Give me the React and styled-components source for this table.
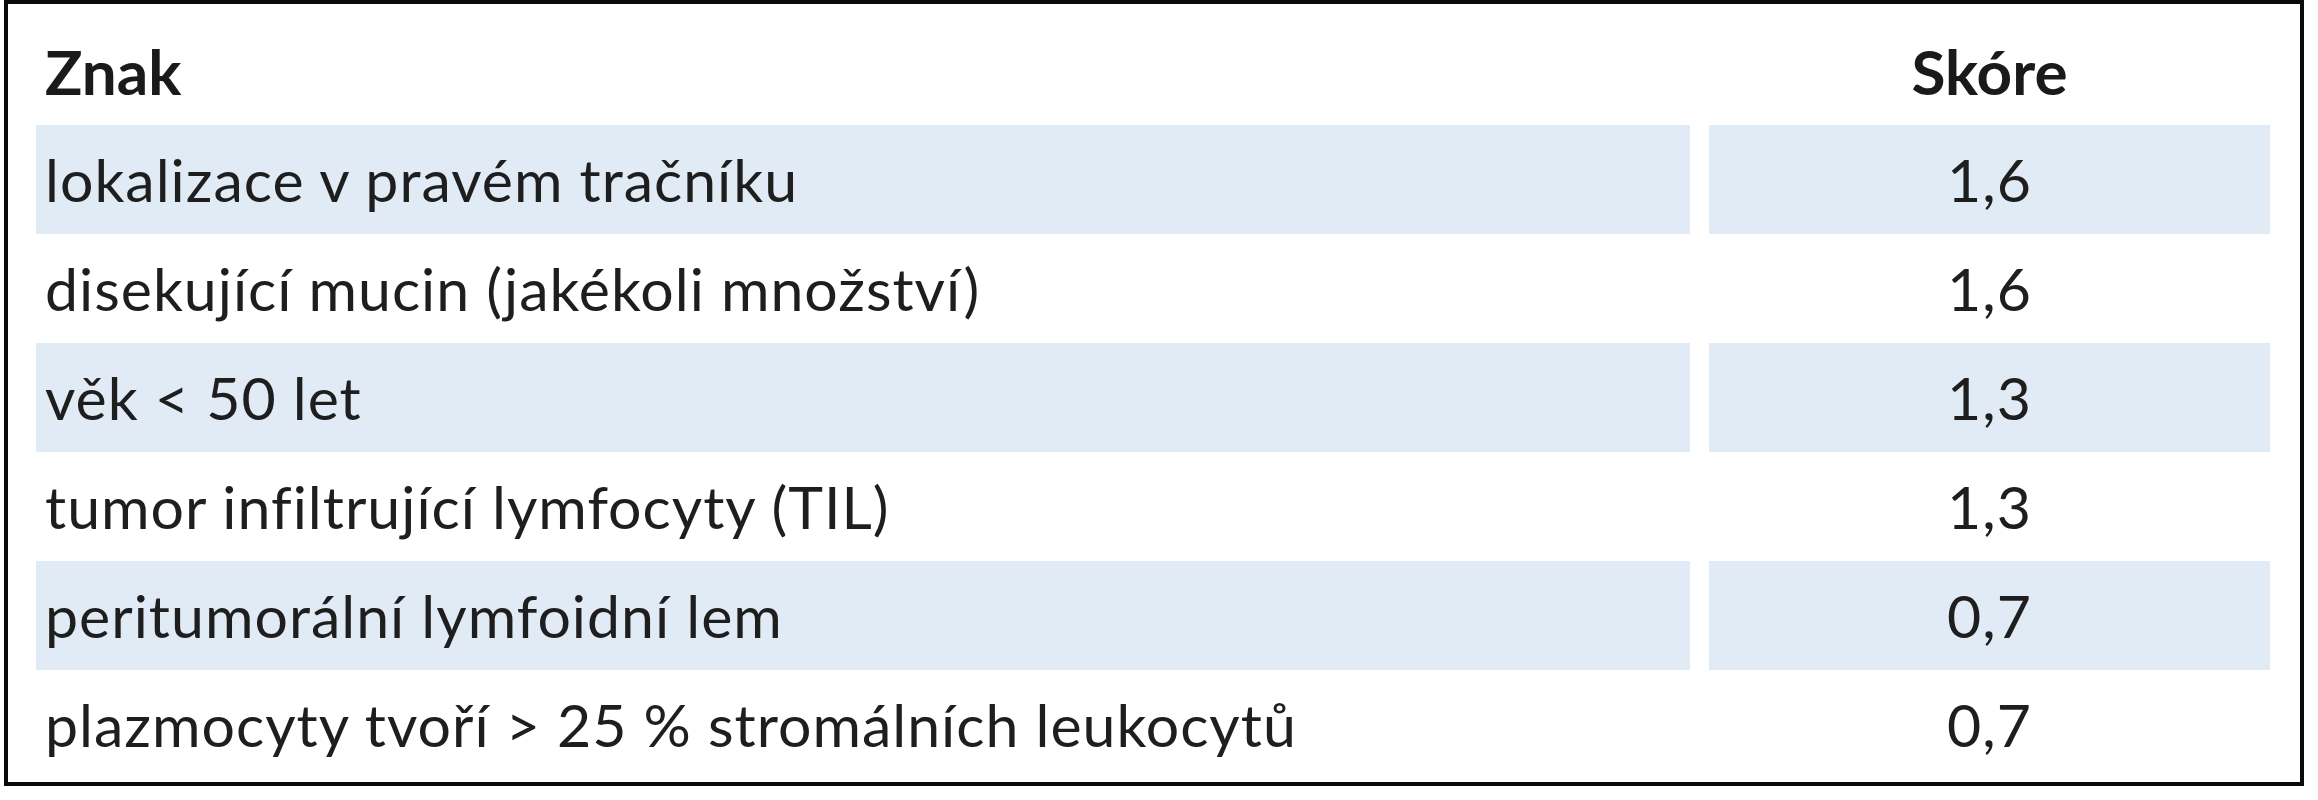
import styled, { createGlobalStyle } from "styled-components";

const GlobalStyle = createGlobalStyle`
  html, body {
    margin: 0;
    padding: 0;
    background: #ffffff;
  }
  body {
    font-family: Lato, "Open Sans", "Liberation Sans", sans-serif;
    color: #1e1e1e;
  }
`;

const rows = [
  { sign: "lokalizace v pravém tračníku", score: "1,6" },
  { sign: "disekující mucin (jakékoli množství)", score: "1,6" },
  { sign: "věk < 50 let", score: "1,3" },
  { sign: "tumor infiltrující lymfocyty (TIL)", score: "1,3" },
  { sign: "peritumorální lymfoidní lem", score: "0,7" },
  { sign: "plazmocyty tvoří > 25 % stromálních leukocytů", score: "0,7" },
];

const Frame = styled.div`
  box-sizing: border-box;
  width: 2300px;
  height: 786px;
  margin-left: 4px;
  border: 4px solid #0a0a0a;
  padding: 0 30px 3px 28px;
  background: #ffffff;
`;

const Table = styled.div`
  display: grid;
  grid-template-columns: 1654px 561px;
  grid-template-rows: 121px repeat(6, 109px);
  column-gap: 19px;
`;

const HeadCell = styled.div`
  box-sizing: border-box;
  padding: 30px 0 0 ${(p) => (p.$center ? "0" : "9px")};
  font-size: 62px;
  font-weight: 700;
  line-height: 74px;
  color: #1a1a1a;
  text-align: ${(p) => (p.$center ? "center" : "left")};
`;

const Cell = styled.div`
  box-sizing: border-box;
  padding: 1px 0 0 ${(p) => (p.$center ? "0" : "9px")};
  font-size: 59px;
  letter-spacing: 1px;
  line-height: 108px;
  white-space: nowrap;
  background: ${(p) => (p.$shaded ? "#e1ebf6" : "transparent")};
  text-align: ${(p) => (p.$center ? "center" : "left")};
`;

export default function App() {
  return (
    <>
      <GlobalStyle />
      <Frame>
        <Table>
          <HeadCell>Znak</HeadCell>
          <HeadCell $center>Skóre</HeadCell>
          {rows.map((row, i) => (
            <>
              <Cell key={`s${i}`} $shaded={i % 2 === 0}>
                {row.sign}
              </Cell>
              <Cell key={`v${i}`} $shaded={i % 2 === 0} $center>
                {row.score}
              </Cell>
            </>
          ))}
        </Table>
      </Frame>
    </>
  );
}
